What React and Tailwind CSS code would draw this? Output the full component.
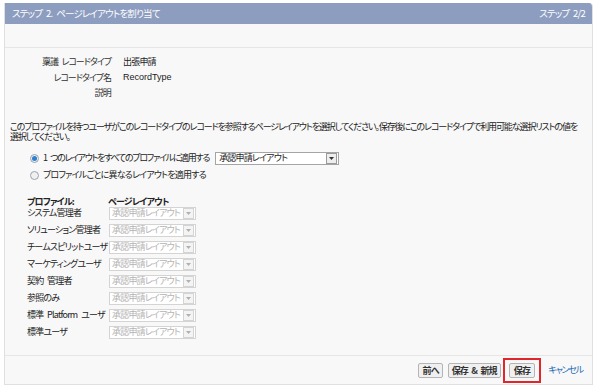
const PROFILES = [
  "システム管理者",
  "ソリューション管理者",
  "チームスピリットユーザ",
  "マーケティングユーザ",
  "契約 管理者",
  "参照のみ",
  "標準 Platform ユーザ",
  "標準ユーザ",
];

const font =
  "font-['Noto_Sans_CJK_JP',sans-serif] [font-feature-settings:'palt'] tracking-[-0.8px] [word-spacing:2.5px]";

function Arrow({ disabled }) {
  return (
    <span
      className={`flex h-[11px] w-[11px] shrink-0 items-center justify-center border ${
        disabled ? "border-[#d4d4d4] bg-[#f4f4f4]" : "border-[#9a9a9a] bg-[#eeeeee]"
      }`}
    >
      <svg width="5" height="3" viewBox="0 0 5 3">
        <path d="M0 0h5L2.5 3z" fill={disabled ? "#b0b0b0" : "#333"} />
      </svg>
    </span>
  );
}

function Radio({ checked }) {
  return (
    <span className="flex h-[9px] w-[9px] shrink-0 items-center justify-center rounded-full border border-[#9aa4b0] bg-[#f0f0f0]">
      {checked && <span className="h-[5px] w-[5px] rounded-full bg-[#2f7fd0]" />}
    </span>
  );
}

const btn =
  "h-[15px] rounded-[2px] border border-[#b5b5b5] bg-[#f0f0f0] text-[9px] font-bold leading-none text-[#333] [word-spacing:2px]";

export default function App() {
  return (
    <div className={`h-[389px] w-[600px] whitespace-nowrap bg-white pl-[4px] pt-[3px] text-[9px] text-[#222] ${font}`}>
      <div className="flex h-[382px] w-[589px] flex-col overflow-hidden rounded-tr-[4px] border-l border-r border-b border-[#e0e0e0] bg-[#f8f8f8]">
        <div className="flex h-[21px] items-center justify-between bg-[#8d9dbf] px-[7px] text-[9.5px] text-white">
          <span>ステップ 2. ページレイアウトを割り当て</span>
          <span>ステップ 2/2</span>
        </div>
        <div className="h-[24px] border-b border-[#e6e6e6]" />

        <div className="flex-1 border-b border-[#e6e6e6]">
          <div className="mt-[8px] grid grid-cols-[106px_1fr] gap-x-[12px] gap-y-[4px] leading-[11.5px]">
            <span className="text-right tracking-[-1px] text-[#333]">稟議 レコードタイプ</span>
            <span>出張申請</span>
            <span className="text-right tracking-[-1px] text-[#333]">レコードタイプ名</span>
            <span className="font-['Liberation_Sans','Noto_Sans_CJK_JP',sans-serif] tracking-normal">RecordType</span>
            <span className="text-right text-[#333]">説明</span>
            <span />
          </div>

          <p className="mt-[23px] pl-[5px] leading-[10.5px] tracking-[-1.1px]">
            このプロファイルを持つユーザがこのレコードタイプのレコードを参照するページレイアウトを選択してください。保存後にこのレコードタイプで利用可能な選択リストの値を
            <br />
            選択してください。
          </p>

          <div className="mt-[9px] pl-[25px]">
            <div className="flex h-[13px] items-center gap-[4px]">
              <Radio checked />
              <span className="tracking-[-1.3px]">1 つのレイアウトをすべてのプロファイルに適用する</span>
              <span className="ml-[2px] flex h-[13px] w-[124px] items-center justify-between border border-[#a5a5a5] bg-white pl-[3px] pr-[1px]">
                <span>承認申請レイアウト</span>
                <Arrow />
              </span>
            </div>
            <div className="mt-[4px] flex h-[13px] items-center gap-[4px]">
              <Radio />
              <span>プロファイルごとに異なるレイアウトを適用する</span>
            </div>
          </div>

          <div className="mt-[13px] pl-[22px]">
            <div className="grid h-[10px] grid-cols-[81px_1fr] items-center font-bold">
              <span>プロファイル:</span>
              <span>ページレイアウト</span>
            </div>
            {PROFILES.map((p) => (
              <div key={p} className="grid h-[17px] grid-cols-[82px_1fr] items-center">
                <span>{p}</span>
                <span className="flex h-[13px] w-[87px] items-center justify-between overflow-hidden border border-[#d4d4d4] bg-white pl-[2px] pr-[1px] text-[#b4b4b4]">
                  <span>承認申請レイアウト</span>
                  <Arrow disabled />
                </span>
              </div>
            ))}
          </div>
        </div>

        <div className="flex h-[28px] items-center justify-end pr-[9px]">
          <button className={`${btn} px-[3px]`}>前へ</button>
          <button className={`${btn} ml-[5px] px-[3px]`}>保存 &amp; 新規</button>
          <span className="ml-[2px] flex h-[25px] items-center border-2 border-[#e0262c] px-[4px]">
            <button className={`${btn} px-[4px]`}>保存</button>
          </span>
          <span className="ml-[7px] tracking-[-1.2px] text-[#1b6bb5]">キャンセル</span>
        </div>
      </div>
    </div>
  );
}
